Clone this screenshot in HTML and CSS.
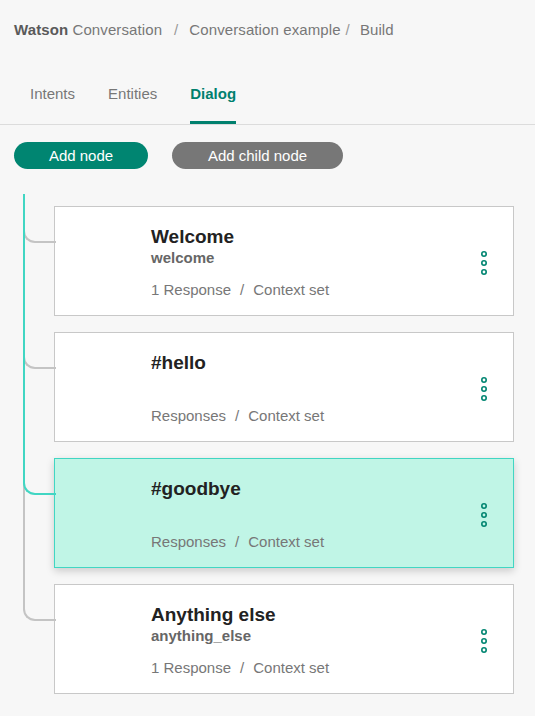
FILE: index.html
```html
<!DOCTYPE html>
<html>
<head>
<meta charset="utf-8">
<link rel="stylesheet" href="styles.css">
</head>
<body>
<div class="breadcrumb"><b>Watson</b> Conversation<span class="sep">/</span>Conversation example<span class="sep sep-tight">/</span>Build</div>
<nav class="tabs">
  <a class="tab">Intents</a>
  <a class="tab">Entities</a>
  <a class="tab active">Dialog</a>
</nav>
<div class="actions">
  <button class="btn btn-primary">Add node</button>
  <button class="btn btn-secondary">Add child node</button>
</div>
<div class="tree">
  <div class="row row-first">
    <div class="card">
      <div class="info">
        <div class="title">Welcome</div>
        <div class="sub">welcome</div>
        <div class="meta">1 Response<span class="sep2">/</span>Context set</div>
      </div>
      <svg class="dots" width="8" height="24" viewBox="0 0 8 24"><circle cx="4" cy="3" r="2.2"/><circle cx="4" cy="12" r="2.2"/><circle cx="4" cy="21" r="2.2"/></svg>
    </div>
  </div>
  <div class="row">
    <div class="card">
      <div class="info">
        <div class="title">#hello</div>
        <div class="sub"></div>
        <div class="meta">Responses<span class="sep2">/</span>Context set</div>
      </div>
      <svg class="dots" width="8" height="24" viewBox="0 0 8 24"><circle cx="4" cy="3" r="2.2"/><circle cx="4" cy="12" r="2.2"/><circle cx="4" cy="21" r="2.2"/></svg>
    </div>
  </div>
  <div class="row row-selected">
    <div class="card card-selected">
      <div class="info">
        <div class="title">#goodbye</div>
        <div class="sub"></div>
        <div class="meta">Responses<span class="sep2">/</span>Context set</div>
      </div>
      <svg class="dots" width="8" height="24" viewBox="0 0 8 24"><circle cx="4" cy="3" r="2.2"/><circle cx="4" cy="12" r="2.2"/><circle cx="4" cy="21" r="2.2"/></svg>
    </div>
  </div>
  <div class="row row-last">
    <div class="card">
      <div class="info">
        <div class="title">Anything else</div>
        <div class="sub">anything_else</div>
        <div class="meta">1 Response<span class="sep2">/</span>Context set</div>
      </div>
      <svg class="dots" width="8" height="24" viewBox="0 0 8 24"><circle cx="4" cy="3" r="2.2"/><circle cx="4" cy="12" r="2.2"/><circle cx="4" cy="21" r="2.2"/></svg>
    </div>
  </div>
</div>
</body>
</html>
```
FILE: styles.css
```css
* { box-sizing: border-box; }
html, body { margin: 0; padding: 0; }
body {
  background: #f7f7f7;
  font-family: "Liberation Sans", Arial, sans-serif;
  color: #777;
  width: 535px;
  height: 716px;
  overflow: hidden;
}
.breadcrumb {
  padding: 21px 0 0 14px;
  font-size: 15px;
  line-height: 18px;
  color: #777;
  letter-spacing: 0.1px;
}
.breadcrumb b { color: #5a5a5a; }
.breadcrumb .sep { margin: 0 11px 0 12px; color: #999; }
.breadcrumb .sep-tight { margin: 0 10px 0 5px; }
.tabs {
  margin-top: 46px;
  display: flex;
  gap: 33px;
  padding-left: 30px;
  border-bottom: 1px solid #dcdcdc;
}
.tab {
  font-size: 15px;
  line-height: 18px;
  padding-bottom: 18px;
  border-bottom: 3px solid transparent;
  color: #777;
}
.tab.active {
  color: #00806e;
  font-weight: bold;
  border-bottom-color: #00806e;
}
.actions {
  display: flex;
  gap: 24px;
  padding: 17px 0 0 14px;
}
.btn {
  height: 27px;
  border: none;
  border-radius: 14px;
  color: #fff;
  font-family: inherit;
  font-size: 15px;
  padding: 0;
}
.btn-primary { background: #008571; width: 134px; }
.btn-secondary { background: #777; width: 171px; }
.tree {
  margin: 37px 0 0 23px;
  width: 491px;
  display: flex;
  flex-direction: column;
  gap: 16px;
}
.row {
  position: relative;
  padding-left: 31px;
  --line: #41d6c3;
  --conn: #c4c4c4;
}
.row::before {
  content: "";
  position: absolute;
  z-index: 1;
  left: 0;
  top: -16px;
  bottom: 0;
  width: 2px;
  background: var(--line);
}
.row-first::before { top: -12px; }
.row::after {
  content: "";
  position: absolute;
  left: 0;
  top: 21px;
  width: 31px;
  height: 14px;
  border-left: 2px solid var(--conn);
  border-bottom: 2px solid var(--conn);
  border-bottom-left-radius: 12px;
}
.row-selected { --conn: #41d6c3; }
.row-selected::before {
  background: linear-gradient(#41d6c3 0, #41d6c3 37px, #c4c4c4 37px);
  z-index: 0;
}
.row-selected::after { z-index: 1; }
.row-last { --line: #c4c4c4; }
.row-last::before { bottom: auto; height: 41px; }
.card {
  height: 110px;
  background: #fff;
  border: 1px solid #c8c8c8;
  display: flex;
  align-items: center;
  position: relative;
}
.card-selected {
  background: #c0f5e6;
  border-color: #41d6c3;
  box-shadow: 0 3px 8px rgba(0, 0, 0, 0.18);
}
.info {
  flex: 1;
  align-self: flex-start;
  padding: 19px 0 0 96px;
}
.title {
  font-size: 19px;
  line-height: 22px;
  font-weight: bold;
  color: #222;
}
.sub {
  font-size: 15px;
  line-height: 20px;
  font-weight: bold;
  color: #666;
  min-height: 20px;
}
.meta {
  margin-top: 12px;
  font-size: 15px;
  line-height: 20px;
  color: #777;
}
.sep2 { margin: 0 9px; }
.dots {
  margin: 4px 25px 0 0;
  fill: none;
  stroke: #008571;
  stroke-width: 1.6;
}
```
